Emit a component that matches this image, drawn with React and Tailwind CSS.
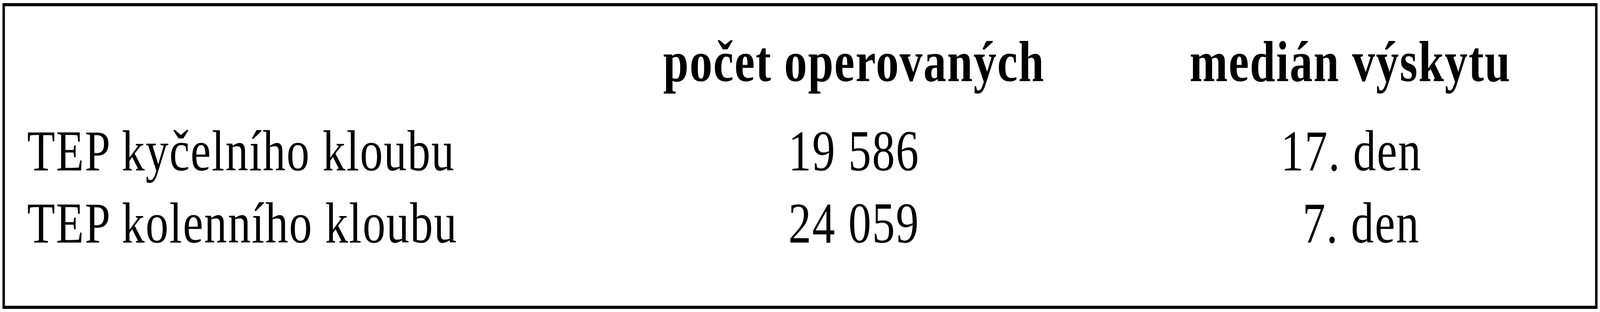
const rows = [
  { name: 'TEP kyčelního kloubu', count: '19 586', median: '17. den' },
  { name: 'TEP kolenního kloubu', count: '24 059', median: '7. den' },
]

const cols = 'grid grid-cols-[1771px_1400px_1400px] gap-x-[208px]'

// The table is drawn at 5184px and squeezed horizontally to fit the 4096px-wide window.
export default function App() {
  return (
    <div className="w-full h-[800px] bg-white overflow-hidden">
      <div className="w-[5184px] h-[800px] p-2 origin-top-left scale-x-[0.790123]">
        <div
          className="h-[784px] border-8 border-black pl-[72px] pt-[50px] text-black text-[148px] leading-[185px] tracking-[3px]"
          style={{ fontFamily: '"Liberation Serif", "Times New Roman", serif' }}
        >
          {/* Header */}
          <div className={`${cols} font-bold mb-[44px]`}>
            <div />
            <div className="text-center whitespace-nowrap">počet operovaných</div>
            <div className="text-center whitespace-nowrap">medián výskytu</div>
          </div>

          {/* Body */}
          {rows.map(row => (
            <div key={row.name} className={cols}>
              <div className="whitespace-nowrap">{row.name}</div>
              <div className="text-center whitespace-nowrap">{row.count}</div>
              <div className="flex justify-center">
                <span className="w-[450px] text-right whitespace-nowrap">{row.median}</span>
              </div>
            </div>
          ))}
        </div>
      </div>
    </div>
  )
}
